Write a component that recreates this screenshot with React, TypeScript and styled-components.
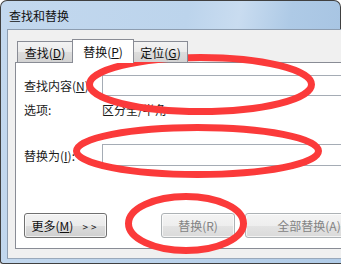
import styled, { createGlobalStyle } from "styled-components";

const GlobalStyle = createGlobalStyle`
  html, body {
    margin: 0;
    padding: 0;
    background: #ffffff;
  }
  * {
    box-sizing: border-box;
  }
`;

const App = () => {
  return (
    <>
      <GlobalStyle />
      <Window>
        <TitleBar>查找和替换</TitleBar>
        <Frame>
          <Client>
            <TabRow>
              <Tab $width={56}>
                查找(<u>D</u>)
              </Tab>
              <Tab $width={62} $active>
                替换(<u>P</u>)
              </Tab>
              <Tab $width={55}>
                定位(<u>G</u>)
              </Tab>
            </TabRow>
            <Panel>
              <FieldRow>
                <Label>
                  查找内容(<u>N</u>):
                </Label>
                <TextBox />
              </FieldRow>
              <OptionRow>
                <Label>选项:</Label>
                <span>区分全/半角</span>
              </OptionRow>
              <FieldRow $top={27}>
                <Label>
                  替换为(<u>I</u>):
                </Label>
                <TextBox $height={22} />
              </FieldRow>
              <ButtonRow>
                <Button $width={83} $gapAfter={54}>
                  更多(<u>M</u>)<Chevrons>&gt;&gt;</Chevrons>
                </Button>
                <Button $width={74} $gapAfter={10} disabled>
                  替换(R)
                </Button>
                <Button $width={128} disabled>
                  全部替换(A)
                </Button>
              </ButtonRow>
            </Panel>
          </Client>
        </Frame>
        <Marks width="341" height="264" viewBox="0 0 341 264">
          <ellipse cx="200.5" cy="84.5" rx="111" ry="27" />
          <ellipse cx="197.5" cy="151" rx="121" ry="23.5" />
          <ellipse cx="186" cy="223.5" rx="57.5" ry="27" />
        </Marks>
      </Window>
    </>
  );
};

export default App;

const Window = styled.div`
  position: relative;
  width: 341px;
  height: 264px;
  overflow: hidden;
  display: flex;
  flex-direction: column;
  font-family: "Noto Sans CJK SC", "Microsoft YaHei", sans-serif;
  font-size: 12px;
  color: #1a1a1a;
`;

const TitleBar = styled.div`
  height: 29px;
  flex: none;
  display: flex;
  align-items: center;
  padding-left: 8px;
  border: 1px solid #404040;
  border-bottom: none;
  border-radius: 7px 7px 0 0;
  background: linear-gradient(
    100deg,
    #c3d8ee 0%,
    #bcd4ec 55%,
    #c9dcf0 70%,
    #aecae6 85%,
    #a8c5e3 100%
  );
  font-size: 12px;
  color: #111;
`;

const Frame = styled.div`
  flex: 1;
  display: flex;
  padding: 0 0 4px 6px;
  border-left: 1px solid #404040;
  border-bottom: 1px solid #404040;
  border-bottom-left-radius: 3px;
  background: linear-gradient(100deg, #c3d8ee 0%, #bad2eb 60%, #b0cbe7 100%);
`;

const Client = styled.div`
  flex: 1;
  display: flex;
  flex-direction: column;
  padding: 9px 0 9px 7px;
  border-top: 1px solid #8d9db0;
  border-left: 1px solid #8d9db0;
  border-bottom: 1px solid #9aa9bb;
  background: #f0f0f0;
`;

const TabRow = styled.div`
  display: flex;
  align-items: flex-end;
  height: 23px;
  padding-left: 2px;
`;

const Tab = styled.div<{ $width: number; $active?: boolean }>`
  position: relative;
  z-index: ${(p) => (p.$active ? 2 : 1)};
  width: ${(p) => p.$width}px;
  height: ${(p) => (p.$active ? 24 : 21)}px;
  margin-left: -1px;
  margin-bottom: ${(p) => (p.$active ? -1 : 0)}px;
  display: flex;
  align-items: center;
  justify-content: center;
  padding-bottom: ${(p) => (p.$active ? 1 : 0)}px;
  border: 1px solid #898c95;
  border-bottom: none;
  background: ${(p) =>
    p.$active
      ? "#ffffff"
      : "linear-gradient(to bottom, #f3f3f3 0%, #ebebeb 50%, #dddddd 51%, #d3d3d3 100%)"};
  color: #111;

  &:first-child {
    margin-left: 0;
  }
`;

const Panel = styled.div`
  display: flex;
  flex-direction: column;
  padding: 12px 0 10px 8px;
  border: 1px solid #898c95;
  border-right: none;
  background: #ffffff;
  overflow: hidden;
`;

const FieldRow = styled.div<{ $top?: number }>`
  display: flex;
  align-items: center;
  margin-top: ${(p) => p.$top ?? 0}px;
`;

const OptionRow = styled.div`
  display: flex;
  align-items: center;
  height: 16px;
  margin-top: 5px;
`;

const Label = styled.span`
  width: 78px;
  flex: none;
  white-space: nowrap;
`;

const TextBox = styled.div<{ $height?: number }>`
  width: 260px;
  flex: none;
  height: ${(p) => p.$height ?? 21}px;
  border: 1px solid #a5acb5;
  background: #ffffff;
`;

const ButtonRow = styled.div`
  display: flex;
  margin-top: 47px;
`;

const Button = styled.button<{ $width: number; $gapAfter?: number }>`
  flex: none;
  width: ${(p) => p.$width}px;
  height: 25px;
  margin: 0 ${(p) => p.$gapAfter ?? 0}px 0 0;
  padding: 0;
  border: 1px solid #707070;
  border-radius: 3px;
  background: linear-gradient(
    to bottom,
    #f2f2f2 0%,
    #ebebeb 50%,
    #dddddd 51%,
    #cfcfcf 100%
  );
  box-shadow: inset 0 0 0 1px rgba(255, 255, 255, 0.7);
  font-family: inherit;
  font-size: 12px;
  color: #111;
  white-space: nowrap;

  &:disabled {
    border-color: #adb2b5;
    color: #838383;
    background: linear-gradient(
      to bottom,
      #f4f4f4 0%,
      #eeeeee 50%,
      #e3e3e3 51%,
      #dadada 100%
    );
  }
`;

const Chevrons = styled.span`
  margin-left: 9px;
  font-size: 10px;
  letter-spacing: 3px;
`;

const Marks = styled.svg`
  position: absolute;
  top: 0;
  left: 0;
  pointer-events: none;

  ellipse {
    fill: none;
    stroke: #fb3a3a;
    stroke-width: 7;
  }
`;
